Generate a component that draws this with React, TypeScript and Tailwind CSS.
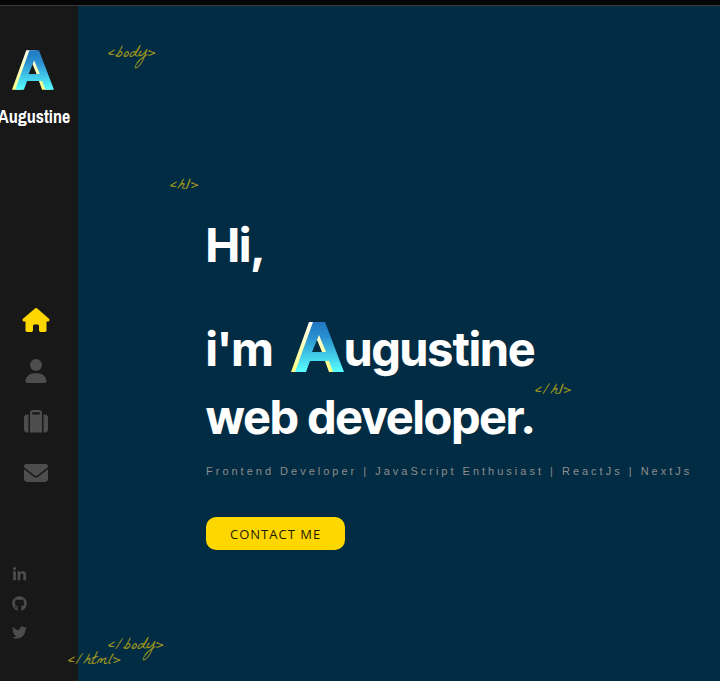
import { useId } from 'react';
import type { ReactNode } from 'react';
import { FaHouse, FaUser, FaSuitcase, FaEnvelope, FaLinkedinIn, FaGithub, FaTwitter } from 'react-icons/fa6';

const LETTER = 'M22 0H34L53 50H42L38 39H19L15 50H4ZM28 13L21 30H35Z';

function LetterA({ className, label }: { className: string; label?: string }) {
  const id = useId();
  return (
    <svg viewBox="0 0 53 50" className={className} role="img" aria-label={label ?? 'A'}>
      <defs>
        <linearGradient id={`${id}face`} x1="0" y1="0" x2="0" y2="1">
          <stop offset="0" stopColor="#2078c2" />
          <stop offset="0.3" stopColor="#2a8fd0" />
          <stop offset="1" stopColor="#58ffff" />
        </linearGradient>
        <linearGradient id={`${id}edge`} x1="0" y1="0" x2="0" y2="1">
          <stop offset="0" stopColor="#fffff0" />
          <stop offset="1" stopColor="#ffff80" />
        </linearGradient>
      </defs>
      <path d={LETTER} fillRule="evenodd" fill={`url(#${id}edge)`} transform="translate(-4 0)" />
      <path d={LETTER} fillRule="evenodd" fill={`url(#${id}face)`} />
    </svg>
  );
}

function Tag({ className = '', children }: { className?: string; children: ReactNode }) {
  return (
    <span
      className={`block whitespace-nowrap font-['La_Belle_Aurore','Lato',cursive] text-[18px] font-normal leading-5 text-[#9d9420] ${className}`}
    >
      {children}
    </span>
  );
}

const pages = [
  { name: 'Home', Icon: FaHouse, style: 'text-[#ffd700]' },
  { name: 'About', Icon: FaUser, style: 'text-[#4d4d4e]' },
  { name: 'Portfolio', Icon: FaSuitcase, style: 'text-[#4d4d4e]' },
  { name: 'Contact', Icon: FaEnvelope, style: 'text-[#4d4d4e]' },
];

const socials = [
  { name: 'LinkedIn', Icon: FaLinkedinIn },
  { name: 'GitHub', Icon: FaGithub },
  { name: 'Twitter', Icon: FaTwitter },
];

export default function App() {
  return (
    <div className="flex min-h-screen flex-col overflow-hidden bg-[#022c43] font-['Liberation_Sans',Arial,sans-serif]">
      <div className="h-1.5 shrink-0 border-b border-[#3a3a3a] bg-[#060606]" />
      <div className="flex grow">
        <aside className="flex w-[78px] shrink-0 flex-col justify-between bg-[#181819] pt-11 pb-[41px]">
          <a href="#home" className="flex flex-col text-white">
            <LetterA className="ml-3 h-10 w-[42px]" label="Augustine logo" />
            <span className="-ml-0.5 mt-[17px] font-['Archivo_Narrow','Liberation_Sans',sans-serif] text-[18px] leading-5 font-bold">
              Augustine
            </span>
          </a>
          <nav aria-label="Pages" className="mt-[98px] flex flex-col items-center gap-[27px] pr-1.5">
            {pages.map(({ name, Icon, style }) => (
              <a key={name} href={`#${name.toLowerCase()}`} aria-label={name} className={style}>
                <Icon className="h-6 w-7" />
              </a>
            ))}
          </nav>
          <nav aria-label="Social links" className="flex flex-col gap-3.5 pl-3 text-[#4d4d4e]">
            {socials.map(({ name, Icon }) => (
              <a key={name} href={`#${name.toLowerCase()}`} aria-label={name} className="w-4">
                <Icon className="size-[15px]" />
              </a>
            ))}
          </nav>
        </aside>
        <main className="relative flex min-w-0 grow flex-col pt-[39px] pl-[30px]">
          <Tag>&lt;body&gt;</Tag>
          <section className="mt-28 pl-[62px]">
            <Tag>&lt;h1&gt;</Tag>
            <div className="mt-3.5 pl-9">
              <h1 className="font-['Inter_Tight','Liberation_Sans',sans-serif] text-[47px] leading-[68px] font-bold text-white">
                <span className="block">Hi,</span>
                <span className="mt-9 flex">
                  i&apos;m
                  <LetterA className="mt-[7px] ml-[18px] h-[50px] w-[53px]" />
                  <span className="relative">
                    ugustine
                    <span className="absolute top-[67px] left-full">
                      <Tag>&lt;/h1&gt;</Tag>
                    </span>
                  </span>
                </span>
                <span className="block">web developer.</span>
              </h1>
              <p className="mt-3 text-[11px] leading-4 tracking-[3px] whitespace-nowrap text-[#8d8d8d]">
                Frontend Developer | JavaScript Enthusiast | ReactJs | NextJs
              </p>
              <button
                type="button"
                className="mt-[38px] h-[33px] rounded-[10px] bg-[#ffd700] px-6 pt-0.5 font-['Open_Sans',sans-serif] text-[13px] tracking-[1px] text-[#1c1a08]"
              >
                CONTACT ME
              </button>
            </div>
          </section>
          <div className="mt-auto pb-[9px]">
            <Tag>&lt;/body&gt;</Tag>
            <Tag className="relative -mt-[5px] -ml-10">&lt;/html&gt;</Tag>
          </div>
        </main>
      </div>
    </div>
  );
}
